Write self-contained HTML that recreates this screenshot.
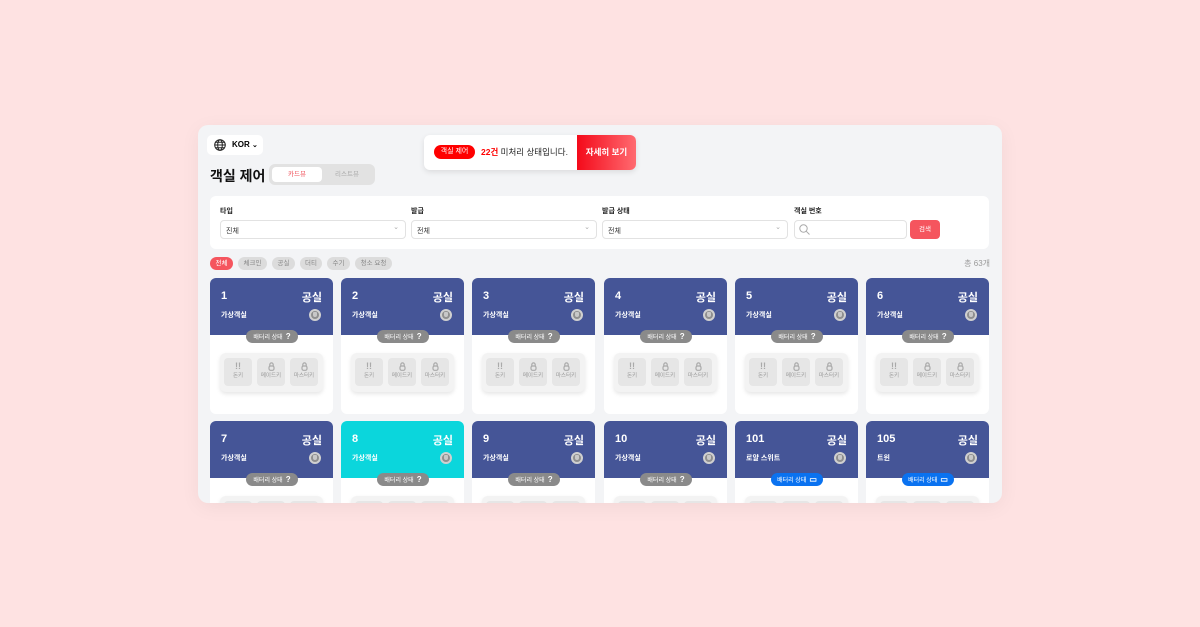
<!DOCTYPE html><html><head><meta charset="utf-8"><style>
*{box-sizing:border-box;margin:0;padding:0}
body{width:1200px;height:627px;background:#fee2e2;font-family:"Liberation Sans","Noto Sans CJK KR",sans-serif;position:relative;overflow:hidden}
.a{position:absolute}
#p{left:198px;top:125px;width:804px;height:378px;background:#f3f4f6;border-radius:10px;overflow:hidden;box-shadow:0 4px 20px rgba(0,0,0,.05)}
.lab{font-size:7px;font-weight:bold;color:#222}
.sel{height:19px;background:#fff;border:1px solid #e2e2e2;border-radius:4px;font-size:7px;padding:5px 5px;color:#333}
.sel:after{content:"⌄";position:absolute;right:6px;top:2px;color:#aaa;font-size:7px}
.chip{height:13px;border-radius:7px;background:#dcdcdc;color:#888;font-size:6.5px;text-align:center;line-height:13px}
.card{width:123px;height:136px;background:#fff;border-radius:6px;overflow:hidden}
.hd{position:absolute;left:0;top:0;width:123px;height:57px;background:#455597;color:#fff}
.num{position:absolute;left:11px;top:12px;font-size:11px;font-weight:bold}
.st{position:absolute;right:11px;top:11px;font-size:11px;font-weight:bold}
.nm{position:absolute;left:11px;top:32px;font-size:7px;font-weight:bold}
.ci{position:absolute;right:12px;top:31px;width:12px;height:12px;border-radius:50%;background:#8f8f8f;border:2px solid #d0d0d0}
.ci:after{content:"";position:absolute;left:2px;top:1px;width:4px;height:5px;background:#c8c8c8;border-radius:1px 1px 2px 2px}
.bat{position:absolute;left:36px;top:52px;width:52px;height:13px;border-radius:7px;background:#8a8a8a;color:#fff;font-size:6px;line-height:13px;text-align:center}
.bat b{font-size:8px;margin-left:3px}
.kg{position:absolute;left:10px;top:75px;width:103px;height:39px;background:#f3f3f3;border-radius:6px;box-shadow:0 2px 4px rgba(0,0,0,.1)}
.k{position:absolute;top:5px;width:28px;height:28px;background:#e6e6e6;border-radius:4px;font-size:5.5px;color:#999;text-align:center;padding-top:4px;line-height:9px}
.k i{display:block;font-style:normal;font-size:9px;color:#aaa;font-weight:bold;height:10px}
</style></head><body>
<div id="p" class="a">
<div class="a" style="left:9px;top:10px;width:56px;height:20px;background:#fff;border-radius:5px;font-size:8px;font-weight:bold;line-height:20px;padding-left:25px">KOR <span style="font-size:7px">⌄</span>
<svg class="a" style="left:7px;top:4px" width="12" height="12" viewBox="0 0 12 12" fill="none" stroke="#222" stroke-width="1"><circle cx="6" cy="6" r="5.3"/><ellipse cx="6" cy="6" rx="2.3" ry="5.3"/><path d="M.7 6h10.6M1.5 3.3h9M1.5 8.7h9"/></svg></div>
<div class="a" style="left:12px;top:41px;font-size:14px;font-weight:bold;color:#111">객실 제어</div>
<div class="a" style="left:71px;top:39px;width:106px;height:21px;background:#e2e2e2;border-radius:6px"><div class="a" style="left:3px;top:3px;width:50px;height:15px;background:#fff;border-radius:4px;color:#f0505a;font-size:6.5px;text-align:center;line-height:15px">카드뷰</div><div class="a" style="left:53px;top:3px;width:50px;height:15px;color:#aaa;font-size:6.5px;text-align:center;line-height:15px">리스트뷰</div></div>
<div class="a" style="left:226px;top:10px;width:212px;height:35px;background:#fff;border-radius:6px;overflow:hidden;box-shadow:0 2px 6px rgba(0,0,0,.1)">
<div class="a" style="left:10px;top:10px;width:41px;height:14px;background:#f00;border-radius:7px;color:#fff;font-size:7px;text-align:center;line-height:14px">객실 제어</div>
<div class="a" style="left:57px;top:11px;font-size:8.5px;color:#222"><b style="color:#f00">22건</b> 미처리 상태입니다.</div>
<div class="a" style="left:153px;top:0;width:59px;height:35px;background:linear-gradient(90deg,#f40a1a,#ff6a70);color:#fff;font-size:8.5px;font-weight:bold;text-align:center;line-height:35px">자세히 보기</div></div>
<div class="a" style="left:12px;top:71px;width:779px;height:53px;background:#fff;border-radius:6px">
<div class="a lab" style="left:10px;top:10px">타입</div><div class="a lab" style="left:201px;top:10px">발급</div><div class="a lab" style="left:392px;top:10px">발급 상태</div><div class="a lab" style="left:584px;top:10px">객실 번호</div>
<div class="a sel" style="left:10px;top:24px;width:186px">진체</div><div class="a sel" style="left:201px;top:24px;width:186px">전체</div><div class="a sel" style="left:392px;top:24px;width:186px">전체</div>
<div class="a" style="left:584px;top:24px;width:113px;height:19px;border:1px solid #e2e2e2;border-radius:4px"><svg class="a" style="left:4px;top:3px" width="11" height="11" viewBox="0 0 11 11" fill="none" stroke="#aaa"><circle cx="4.5" cy="4.5" r="3.7"/><path d="M7.3 7.3L10.5 10.5"/></svg></div>
<div class="a" style="left:700px;top:24px;width:30px;height:19px;background:#f5555e;border-radius:4px;color:#fff;font-size:6.5px;text-align:center;line-height:19px">검색</div></div>
<div class="a chip" style="left:12px;top:132px;width:23px;background:#f5555e;color:#fff">전체</div>
<div class="a chip" style="left:40px;top:132px;width:29px">체크인</div>
<div class="a chip" style="left:74px;top:132px;width:23px">공실</div>
<div class="a chip" style="left:102px;top:132px;width:22px">더티</div>
<div class="a chip" style="left:129px;top:132px;width:23px">수기</div>
<div class="a chip" style="left:157px;top:132px;width:37px">청소 요청</div>
<div class="a" style="right:12px;top:133px;font-size:8px;color:#999">총 63개</div>
<div id="cards"></div>
</div>
<script>
var h='';var xs=[12,143,274,406,537,668];
var r1=['1','2','3','4','5','6'],r2=[['7','가상객실'],['8','가상객실'],['9','가상객실'],['10','가상객실'],['101','로얄 스위트'],['105','트윈']];
var lock='<i><svg width="7" height="9" viewBox="0 0 7 9" fill="none" stroke="#aaa" stroke-width="1.2"><path d="M1.8 4V2.6a1.7 1.7 0 0 1 3.4 0V4"/><rect x="1" y="4" width="5" height="4.3" rx="1.5"/></svg></i>';
function card(x,y,n,nm,teal,blue){var kg='<div class="kg"><div class="k" style="left:4px"><i>!!</i>돈키</div><div class="k" style="left:37px">'+lock+'메이드키</div><div class="k" style="left:70px">'+lock+'마스터키</div></div>';
return '<div class="a card" style="left:'+x+'px;top:'+y+'px"><div class="hd" style="'+(teal?'background:#0bd6dc':'')+'"><div class="num">'+n+'</div><div class="st">공실</div><div class="nm">'+nm+'</div><div class="ci"></div></div><div class="bat" style="'+(blue?'background:#0a72f0':'')+'">배터리 상태<b>'+(blue?'▭':'?')+'</b></div>'+kg+'</div>';}
for(var i=0;i<6;i++)h+=card(xs[i],153,r1[i],'가상객실');
for(var i=0;i<6;i++)h+=card(xs[i],296,r2[i][0],r2[i][1],i==1,i>=4);
document.getElementById('cards').innerHTML=h;
</script>
</body></html>
